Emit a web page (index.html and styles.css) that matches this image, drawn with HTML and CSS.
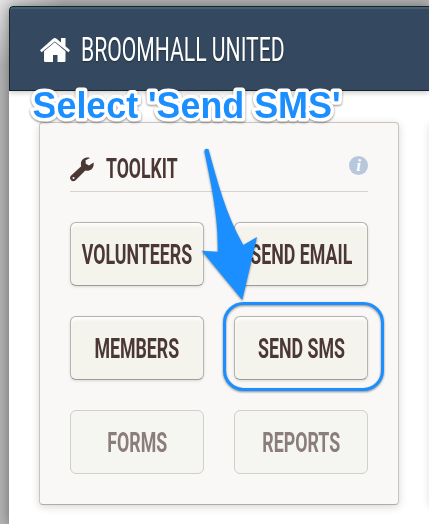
FILE: index.html
```html
<!DOCTYPE html>
<html lang="en">
<head>
  <meta charset="UTF-8" />
  <meta name="viewport" content="width=device-width, initial-scale=1.0"/>
  <title>Broomhall United</title>
  <link rel="stylesheet" href="styles.css">
</head>
<body>

  <div class="page">
    <header>
      <svg class="home" width="32" height="26" viewBox="0 0 32 26">
        <path d="M15.800 5.300 26.500 14.300v9.400q0 1.300-1.300 1.300H18.500v-7h-4.500V25H6.300Q5 25 5 23.700v-9.400z"/>
        <path d="M1 13.300 14 1.700q1.800-1.400 3.600 0L22 5.500V1h4.500v8.300l4.500 4-1.600 2L15.800 4.400 2.600 15.300z"/>
      </svg>
      <h1>BROOMHALL UNITED</h1>
    </header>

    <main>
      <section class="card">
        <div class="card-title">
          <svg class="wrench" width="24" height="25" viewBox="0 0 24 25">
            <path d="M23.500 5.500 19 8.500l-3.200-1.700-.2-3.500L20 .9C15.300-.5 10.700 2.400 10.900 7.200q0 1 .3 2L.9 18.700q-1.800 2.200.1 4.500 2.300 1.900 4.600 0l9.800-9.700c4.900 1.300 9.300-2.800 8.100-8zM3.500 20a1 1 0 1 1 0 2 1 1 0 0 1 0-2z"/>
          </svg>
          <h2>TOOLKIT</h2>
          <span class="info">i</span>
        </div>
        <div class="tools">
          <button><span>VOLUNTEERS</span></button>
          <button><span>SEND EMAIL</span></button>
          <button><span>MEMBERS</span></button>
          <button><span>SEND SMS</span></button>
          <button class="off"><span>FORMS</span></button>
          <button class="off"><span>REPORTS</span></button>
        </div>
      </section>
      <section class="card"></section>
    </main>
  </div>

  <!-- annotation layer -->
  <svg class="notes" width="429" height="524" viewBox="0 0 429 524">
    <text x="32.500" y="118" textLength="308">Select 'Send SMS'</text>
    <path d="M204.300 151q.8-3.500 4.200-1.800C217 180 226 215 243.300 245l13.700-8-14.700 63-40.600-49.300 16 1C218.500 217 211 184 204.300 151z"/>
    <rect x="224.500" y="303.500" width="158" height="86" rx="19"/>
  </svg>

</body>
</html>
```
FILE: styles.css
```css
:root {
  --navy: #34495f;
  --brown: #4b3835;
  --blue: #1b8fff;
  --cream: #f4f3ec;
  --panel: #f9f8f6;
}

* { box-sizing: border-box; margin: 0; padding: 0; }

body {
  width: 429px;
  height: 524px;
  overflow: hidden;
  position: relative;
  padding: 6px 0 0 9px;
  font-family: Roboto, sans-serif;
  background: radial-gradient(circle at 0 0, #e2e2e2 0, rgba(200,200,200,0) 65px), #b2b2b2;
}

.page {
  height: 518px;
  overflow: hidden;
  background: white;
  border-top-left-radius: 4px;
  box-shadow: 0 0 12px rgba(0,0,0,0.4);
}

header {
  height: 85px;
  display: flex;
  align-items: center;
  padding-left: 29px;
  background: var(--navy);
  border: 1px solid #17222d;
  border-right: none;
  border-top-left-radius: 4px;
  box-shadow: inset 0 2px 1px #466073, 0 2px 5px rgba(0,0,0,0.2);
}

.home {
  fill: white;
  flex: none;
  margin-top: 2px;
}

h1 {
  width: 300px;
  margin-left: 10px;
  font-size: 34px;
  font-weight: 400;
  line-height: 40px;
  color: white;
  white-space: nowrap;
  transform: scaleX(0.622);
  transform-origin: left;
  text-shadow: 0 1px 2px rgba(0,0,0,0.4);
}

main {
  display: flex;
  gap: 31px;
  padding: 31px 0 0 30px;
}

.card {
  flex: none;
  width: 360px;
  height: 383px;
  padding: 24px 30px;
  background: var(--panel);
  border: 1px solid #c8c4bf;
  border-bottom-color: #b5aaa0;
  border-radius: 4px;
  box-shadow: 0 2px 8px rgba(0,0,0,0.16);
}

.card-title {
  height: 45px;
  display: flex;
  align-items: center;
  border-bottom: 1px solid #d8d3cc;
}

.wrench {
  fill: var(--brown);
  flex: none;
}

h2 {
  flex: 1;
  margin-left: 12px;
  font-size: 28px;
  font-weight: 700;
  line-height: 32px;
  color: var(--brown);
  transform: scaleX(0.63);
  transform-origin: left;
}

.info {
  width: 19px;
  height: 19px;
  margin-top: -8px;
  border-radius: 50%;
  background: #b7c7dc;
  color: white;
  font: italic bold 17px/19px "Liberation Serif", serif;
  text-align: center;
}

.tools {
  display: grid;
  grid-template-columns: 134px 134px;
  gap: 30px;
  margin-top: 30px;
}

button {
  height: 64px;
  display: flex;
  align-items: center;
  justify-content: center;
  border: 1px solid #b5b3b0;
  border-bottom-color: #9e9c99;
  border-radius: 6px;
  background: var(--cream);
  box-shadow: inset 0 3px 3px rgba(255,255,255,0.8), 0 1px 3px rgba(0,0,0,0.12);
  font-family: Roboto, sans-serif;
  font-size: 28px;
  font-weight: 700;
  color: var(--brown);
  white-space: nowrap;
}

button span {
  flex: none;
  transform: scaleX(0.635);
}

.off {
  background: #f5f5f1;
  border-color: #cfcfcc;
  box-shadow: none;
  color: #8a7d7b;
}

.notes {
  position: absolute;
  top: 0;
  left: 0;
  filter: drop-shadow(0 1px 1px rgba(0,0,0,0.45));
}

.notes text {
  font: bold 36px "Liberation Sans", sans-serif;
  fill: var(--blue);
  stroke: white;
  stroke-width: 7px;
  stroke-linejoin: round;
  paint-order: stroke;
}

.notes path {
  fill: var(--blue);
}

.notes rect {
  fill: none;
  stroke: var(--blue);
  stroke-width: 3px;
}
```
